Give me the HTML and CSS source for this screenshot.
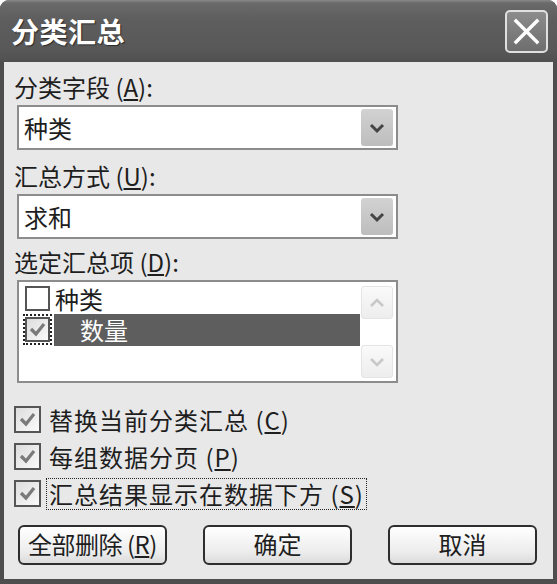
FILE: index.html
```html
<!DOCTYPE html>
<html lang="zh">
<head>
<meta charset="utf-8">
<title>分类汇总</title>
<link rel="stylesheet" href="styles.css">
</head>
<body>
<div class="window">
  <div class="titlebar">
    <span class="title">分类汇总</span>
    <span class="close">
      <svg width="27" height="27" viewBox="0 0 27 27"><path d="M3 3 L24 24 M24 3 L3 24" stroke="#fff" stroke-width="3.4" stroke-linecap="square"/></svg>
    </span>
  </div>
  <div class="content">
    <div class="label first">分类字段 (<u>A</u>):</div>
    <div class="combo">
      <span class="value">种类</span>
      <span class="drop"><svg width="16" height="12" viewBox="0 0 16 12"><path d="M2 3 L8 9 L14 3" fill="none" stroke="#444" stroke-width="3"/></svg></span>
    </div>
    <div class="label second">汇总方式 (<u>U</u>):</div>
    <div class="combo">
      <span class="value">求和</span>
      <span class="drop"><svg width="16" height="12" viewBox="0 0 16 12"><path d="M2 3 L8 9 L14 3" fill="none" stroke="#444" stroke-width="3"/></svg></span>
    </div>
    <div class="label third">选定汇总项 (<u>D</u>):</div>
    <div class="listbox">
      <div class="items">
        <div class="item">
          <span class="cbwrap"><span class="box plain"></span></span>
          <span class="itext">种类</span>
        </div>
        <div class="item">
          <span class="cbwrap focus"><span class="box checked"><svg width="19" height="19" viewBox="0 0 19 19"><path d="M3 9 L8 14 L16 4" fill="none" stroke="#7a7a7a" stroke-width="3.2"/></svg></span></span>
          <span class="itext hl">数量</span>
        </div>
      </div>
      <div class="scrollbar">
        <span class="sbtn"><svg width="16" height="12" viewBox="0 0 16 12"><path d="M2 9 L8 3 L14 9" fill="none" stroke="#c8c8c8" stroke-width="2.6"/></svg></span>
        <span class="track"></span>
        <span class="sbtn"><svg width="16" height="12" viewBox="0 0 16 12"><path d="M2 3 L8 9 L14 3" fill="none" stroke="#c8c8c8" stroke-width="2.6"/></svg></span>
      </div>
    </div>
    <div class="checks">
      <div class="chk">
        <span class="box checked"><svg width="19" height="19" viewBox="0 0 19 19"><path d="M3 9 L8 14 L16 4" fill="none" stroke="#7a7a7a" stroke-width="3.2"/></svg></span>
        <span class="ctext">替换当前分类汇总 (<u>C</u>)</span>
      </div>
      <div class="chk">
        <span class="box checked"><svg width="19" height="19" viewBox="0 0 19 19"><path d="M3 9 L8 14 L16 4" fill="none" stroke="#7a7a7a" stroke-width="3.2"/></svg></span>
        <span class="ctext">每组数据分页 (<u>P</u>)</span>
      </div>
      <div class="chk">
        <span class="box checked"><svg width="19" height="19" viewBox="0 0 19 19"><path d="M3 9 L8 14 L16 4" fill="none" stroke="#7a7a7a" stroke-width="3.2"/></svg></span>
        <span class="ctext focused">汇总结果显示在数据下方 (<u>S</u>)</span>
      </div>
    </div>
    <div class="buttons">
      <span class="btn wide">全部删除 (<u>R</u>)</span>
      <span class="btn">确定</span>
      <span class="btn">取消</span>
    </div>
  </div>
</div>
</body>
</html>
```

FILE: styles.css
```css
html, body {
  margin: 0;
  padding: 0;
  background: #ffffff;
}
body {
  width: 557px;
  height: 584px;
  overflow: hidden;
  font-family: "Noto Sans CJK SC", "Liberation Sans", sans-serif;
  color: #1e1e1e;
}
.window {
  width: 557px;
  height: 584px;
  display: flex;
  flex-direction: column;
  background: #4e4e4e;
  border-radius: 9px 9px 0 0;
  overflow: hidden;
}
.titlebar {
  height: 62px;
  flex: none;
  display: flex;
  align-items: center;
  justify-content: space-between;
  padding: 0 9px 0 11px;
  background: linear-gradient(#8a8a8a 0, #6a6a6a 3px, #5e5e5e 30%, #585858 80%, #505050 100%);
}
.title {
  color: #ffffff;
  font-size: 28px;
  font-weight: bold;
  letter-spacing: 0.5px;
  text-shadow: 1px 1px 1px #2a2a2a;
  line-height: 32px;
}
.close {
  width: 39px;
  height: 39px;
  border: 2px solid #e0e0e0;
  border-radius: 5px;
  background: linear-gradient(#8c8c8c, #6e6e6e);
  display: flex;
  align-items: center;
  justify-content: center;
}
.content {
  flex: 1;
  margin: 0 4px 5px 4px;
  background: #e8e8e8;
  padding: 11px 10px 0 10px;
  display: flex;
  flex-direction: column;
  align-items: flex-start;
}
.label {
  font-size: 24px;
  line-height: 28px;
  height: 28px;
  white-space: nowrap;
}
.label u, .ctext u, .btn u {
  text-decoration: underline;
  text-underline-offset: 2px;
}
.label.second { margin-top: 12px; }
.label.third { margin-top: 9px; }
.combo {
  margin: 4px 0 0 3px;
  width: 381px;
  height: 45px;
  box-sizing: border-box;
  border: 2px solid #8c8c8c;
  background: #ffffff;
  display: flex;
  align-items: center;
  justify-content: space-between;
  padding: 0 3px 0 5px;
}
.value {
  font-size: 24px;
  line-height: 28px;
}
.drop {
  width: 32px;
  height: 37px;
  border-radius: 3px;
  background: linear-gradient(#d2d2d2, #bdbdbd);
  display: flex;
  align-items: center;
  justify-content: center;
}
.listbox {
  margin: 4px 0 0 3px;
  width: 381px;
  height: 103px;
  box-sizing: border-box;
  border: 2px solid #8c8c8c;
  background: #ffffff;
  display: flex;
  justify-content: space-between;
  padding: 1px 3px 3px 4px;
}
.items {
  display: flex;
  flex-direction: column;
}
.item {
  display: flex;
  align-items: center;
  height: 31px;
}
.cbwrap {
  width: 29px;
  height: 31px;
  box-sizing: border-box;
  display: flex;
  align-items: center;
  justify-content: center;
  border: 1px dotted transparent;
}
.cbwrap.focus {
  border: 2px dotted #222;
}
.box {
  width: 27px;
  height: 27px;
  box-sizing: border-box;
  border: 2px solid #555;
  background: linear-gradient(135deg, #dcdcdc, #fbfbfb);
  display: flex;
  align-items: center;
  justify-content: center;
  flex: none;
}
.box.plain {
  background: #ffffff;
}
.cbwrap .box {
  width: 25px;
  height: 25px;
}
.itext {
  font-size: 24px;
  line-height: 28px;
  margin-left: 3px;
}
.itext.hl {
  background: #5e5e5e;
  color: #ffffff;
  width: 306px;
  height: 32px;
  line-height: 32px;
  padding-left: 26px;
  box-sizing: border-box;
  margin-left: 2px;
}
.scrollbar {
  width: 32px;
  display: flex;
  flex-direction: column;
  padding-top: 3px;
}
.sbtn {
  height: 33px;
  box-sizing: border-box;
  border: 1px solid #e4e4e4;
  border-radius: 3px;
  background: linear-gradient(#fafafa, #ededed);
  display: flex;
  align-items: center;
  justify-content: center;
}
.track {
  flex: 1;
  background: #ffffff;
}
.checks {
  margin-top: 18px;
  display: flex;
  flex-direction: column;
}
.chk {
  display: flex;
  align-items: center;
  height: 37px;
}
.ctext {
  font-size: 24px;
  line-height: 28px;
  margin-left: 5px;
  padding: 0 2px;
  border: 1px dotted transparent;
  white-space: nowrap;
  letter-spacing: 1px;
}
.ctext.focused {
  border: 1px dotted #222;
  padding: 1px 2px;
}
.buttons {
  margin: 13px 0 0 4px;
  display: flex;
  gap: 36px;
}
.btn {
  width: 149px;
  height: 40px;
  box-sizing: border-box;
  border: 2px solid #2e2e2e;
  border-radius: 6px;
  background: linear-gradient(#ffffff, #ececec 70%, #dcdcdc);
  font-size: 24px;
  line-height: 34px;
  text-align: center;
  white-space: nowrap;
}
.btn.wide {
  letter-spacing: -0.5px;
}
```
